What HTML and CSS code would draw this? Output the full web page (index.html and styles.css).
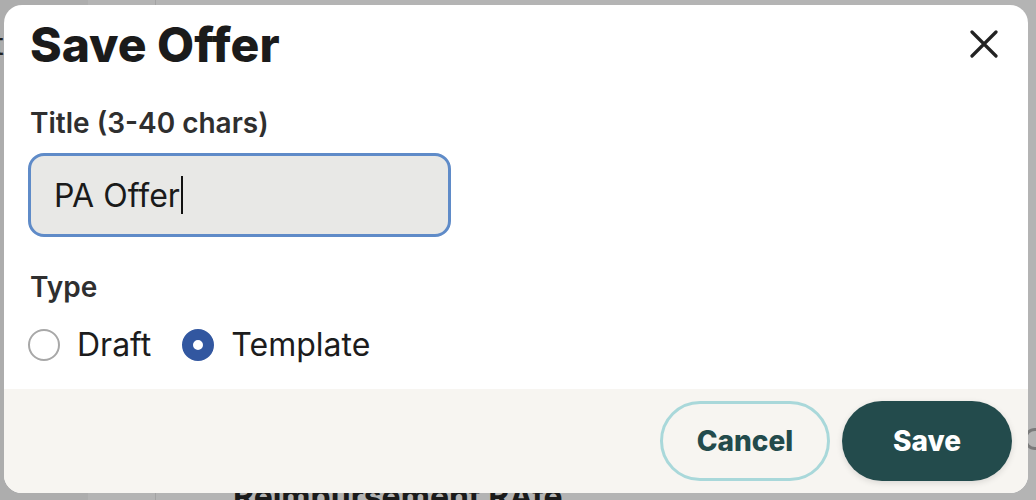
FILE: index.html
```html
<!DOCTYPE html>
<html lang="en">
<head>
<meta charset="utf-8">
<title>Save Offer</title>
<link rel="stylesheet" href="styles.css">
</head>
<body>
<div class="page">
  <div class="backdrop">
    <div class="bg-col bg-col-a"></div>
    <div class="bg-col bg-col-b"></div>
    <span class="bg-letter">t</span>
    <span class="bg-heading">Reimbursement RAte</span>
    <span class="bg-ring"></span>
  </div>
  <div class="overlay">
    <div class="modal" role="dialog" aria-labelledby="dlg-title">
      <div class="modal-body">
        <div class="modal-header">
          <h1 id="dlg-title" class="modal-title">Save Offer</h1>
          <button class="close-btn" aria-label="Close">
            <svg width="28" height="28" viewBox="0 0 28 28" fill="none" stroke="#222" stroke-width="3.2" stroke-linecap="round">
              <path d="M2 2 L26 26 M26 2 L2 26"/>
            </svg>
          </button>
        </div>
        <label class="field-label" for="title-input">Title (3-40 chars)</label>
        <div class="text-input" id="title-input"><span>PA Offer</span><span class="caret"></span></div>
        <div class="field-label type-label">Type</div>
        <div class="radio-row">
          <label class="radio"><span class="radio-dot"></span><span>Draft</span></label>
          <label class="radio checked"><span class="radio-dot"></span><span>Template</span></label>
        </div>
      </div>
      <div class="modal-footer">
        <button class="btn btn-cancel">Cancel</button>
        <button class="btn btn-save">Save</button>
      </div>
    </div>
  </div>
</div>
</body>
</html>
```
FILE: styles.css
```css
* { box-sizing: border-box; }
html, body { margin: 0; padding: 0; }
body {
  font-family: Inter, "Noto Sans", "Liberation Sans", sans-serif;
  color: #1c1c1c;
}
.page {
  position: relative;
  width: 1036px;
  height: 500px;
  overflow: hidden;
  background: #b4b4b4;
}
.backdrop { position: absolute; inset: 0; }
.bg-col { position: absolute; top: 0; bottom: 0; }
.bg-col-a { left: 0; width: 88px; background: #adadad; }
.bg-col-b { left: 155px; width: 1px; background: #a3a3a3; }
.bg-letter {
  position: absolute; left: -6px; top: 26px;
  font-size: 30px; color: #222;
}
.bg-heading {
  position: absolute; left: 233px; top: 477px;
  font-size: 32px; font-weight: 700; color: #1a1a1a;
}
.bg-ring {
  position: absolute; left: 1024px; top: 428px;
  width: 22px; height: 22px; border: 3px solid #7a7a7a; border-radius: 50%;
}
.overlay {
  position: absolute;
  left: 4px; top: 5px;
}
.modal {
  width: 1024px;
  height: 488px;
  background: #fff;
  border-radius: 18px;
  overflow: hidden;
  display: flex;
  flex-direction: column;
}
.modal-body {
  flex: 1;
  padding: 14px 26px 0 26px;
}
.modal-header {
  display: flex;
  justify-content: space-between;
  align-items: flex-start;
}
.modal-title {
  margin: 0;
  font-size: 48px;
  font-weight: 800;
  line-height: 52px;
  color: #1b1b1b;
}
.close-btn {
  border: 0; background: none; padding: 0;
  margin: 11px 4px 0 0;
  width: 28px; height: 28px;
  display: flex;
}
.field-label {
  display: block;
  margin-top: 35px;
  font-size: 28px;
  font-weight: 600;
  line-height: 34px;
  color: #2f2f2f;
}
.text-input {
  margin-top: 13px;
  width: 423px;
  height: 84px;
  margin-left: -2px;
  border: 3px solid #5f8bc8;
  border-radius: 16px;
  background: #e8e8e6;
  display: flex;
  align-items: center;
  padding-left: 23px;
  font-size: 32px;
  color: #1a1a1a;
}
.caret {
  display: inline-block;
  width: 2px; height: 38px;
  background: #111;
  margin-left: 1px;
}
.type-label { margin-top: 33px; }
.radio-row {
  display: flex;
  gap: 33px;
  margin-top: 22px;
}
.radio {
  display: flex;
  align-items: center;
  gap: 17px;
  font-size: 32px;
  line-height: 38px;
  color: #1c1c1c;
}
.radio-dot {
  width: 32px; height: 32px;
  border-radius: 50%;
  border: 2px solid #a8a8a8;
  background: #fff;
  margin-left: -2px;
}
.radio.checked .radio-dot {
  border: 11px solid #3257a0;
  background: #fff;
}
.modal-footer {
  height: 104px;
  background: #f7f5f1;
  display: flex;
  justify-content: flex-end;
  align-items: center;
  gap: 12px;
  padding-right: 16px;
}
.btn {
  width: 170px;
  height: 80px;
  border-radius: 40px;
  font-family: inherit;
  font-size: 28px;
  font-weight: 800;
}
.btn-cancel {
  background: transparent;
  border: 3px solid #a9d8da;
  color: #234b4c;
}
.btn-save {
  background: #234b4c;
  border: 0;
  color: #fff;
  box-shadow: 0 2px 6px rgba(0,0,0,0.12);
}
```
